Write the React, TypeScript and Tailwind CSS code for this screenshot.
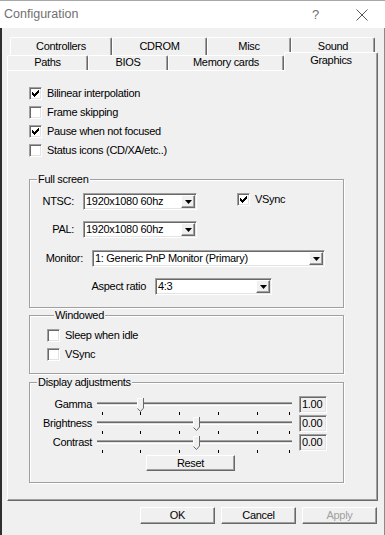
import { ReactNode } from "react";

// classic 3D edges
const raised =
  "border border-t-white border-l-white border-r-[#696969] border-b-[#696969] shadow-[inset_-1px_-1px_0_#a0a0a0]";
const sunken =
  "border border-t-[#a0a0a0] border-l-[#a0a0a0] border-r-white border-b-white shadow-[inset_1px_1px_0_#696969,inset_-1px_-1px_0_#e3e3e3]";

const CHECK = [
  "......#",
  ".....##",
  "#...###",
  "##.###.",
  "#####..",
  ".###...",
  "..#....",
];

function CheckBox({ checked }: { checked?: boolean }) {
  return (
    <span
      className={`flex h-[13px] w-[13px] shrink-0 items-center justify-center bg-white ${sunken}`}
    >
      {checked && (
        <svg width="7" height="7" viewBox="0 0 7 7" shapeRendering="crispEdges">
          {CHECK.map((row, y) =>
            row
              .split("")
              .map((c, x) =>
                c === "#" ? (
                  <rect key={`${x}-${y}`} x={x} y={y} width="1" height="1" fill="#000" />
                ) : null
              )
          )}
        </svg>
      )}
    </span>
  );
}

function CheckRow({ label, checked }: { label: string; checked?: boolean }) {
  return (
    <div className="flex h-[19px] items-center">
      <CheckBox checked={checked} />
      <span className="ml-[5px]">{label}</span>
    </div>
  );
}

function Combo({ value, width }: { value: string; width: string }) {
  return (
    <div className={`flex h-[17px] bg-white p-[1px] ${width} ${sunken}`}>
      <span className="flex-1 truncate pl-[1px] leading-[13px]">{value}</span>
      <span
        className={`flex h-[13px] w-[14px] items-center justify-center bg-[#f0f0f0] ${raised}`}
      >
        <svg width="7" height="4" viewBox="0 0 7 4">
          <path d="M0 0h7L3.5 4z" fill="#000" />
        </svg>
      </span>
    </div>
  );
}

function Group({
  title,
  className,
  children,
}: {
  title: string;
  className: string;
  children: ReactNode;
}) {
  return (
    <fieldset
      className={`ml-[21px] w-[315px] border border-[#a0a0a0] shadow-[inset_1px_1px_0_#fff,1px_1px_0_#fff] ${className}`}
    >
      <legend className="ml-[7px] bg-[#f0f0f0] px-[1px] leading-[13px]">{title}</legend>
      {children}
    </fieldset>
  );
}

const TICKS = [5, 43, 82, 121, 160, 192];

function Slider({ thumb }: { thumb: number }) {
  return (
    <div className="relative h-[19px] w-[195px]">
      <div className="absolute left-0 right-0 top-[7px] h-[4px] border-y border-t-[#a0a0a0] border-b-white bg-[#e3e3e3] shadow-[inset_0_1px_0_#696969]" />
      {TICKS.map((t) => (
        <div key={t} className="absolute top-[17px] h-[3px] w-px bg-black" style={{ left: t }} />
      ))}
      <svg
        className="absolute top-[3px]"
        style={{ left: thumb }}
        width="7"
        height="14"
        viewBox="0 0 7 14"
      >
        <path d="M0.5 0.5H6.5V10L3.5 13.5L0.5 10Z" fill="#f0f0f0" />
        <path d="M0.5 10V0.5H6" fill="none" stroke="#fff" />
        <path d="M6.5 0V10L3.5 13.5L0.5 10.5" fill="none" stroke="#696969" />
      </svg>
    </div>
  );
}

function AdjustRow({ label, thumb, value }: { label: string; thumb: number; value: string }) {
  return (
    <div className="flex h-[19px] items-center">
      <span className="w-[62px] text-right">{label}</span>
      <div className="ml-[5px]">
        <Slider thumb={thumb} />
      </div>
      <div className={`ml-[7px] h-[17px] w-[28px] bg-[#f0f0f0] pl-[2px] leading-[15px] ${sunken}`}>
        {value}
      </div>
    </div>
  );
}

function Button({ label, disabled }: { label: string; disabled?: boolean }) {
  return (
    <div
      className={`flex h-[17px] w-[75px] items-center justify-center bg-[#f0f0f0] ${raised} ${
        disabled ? "text-[#a0a0a0]" : ""
      }`}
    >
      {label}
    </div>
  );
}

function Tab({
  label,
  width,
  height,
  selected,
}: {
  label: string;
  width: string;
  height: string;
  selected?: boolean;
}) {
  return (
    <div
      className={`flex items-center justify-center rounded-t-[2px] border-l border-t border-r border-l-white border-t-white border-r-[#696969] bg-[#f0f0f0] pb-[1px] shadow-[inset_-1px_0_0_#a0a0a0] ${width} ${height} ${
        selected ? "relative z-10 mb-[-1px] pb-[3px]" : ""
      }`}
    >
      {label}
    </div>
  );
}

export default function App() {
  return (
    <div className="flex h-[535px] w-[385px] flex-col bg-[#f0f0f0] font-['Liberation_Sans',Arial,sans-serif] text-[11px] tracking-[-0.3px] text-black">
      {/* Title bar */}
      <div className="flex h-[28px] items-center border-t border-[#a8a8a8] bg-white pl-[4px] pr-[17px] text-[#707070]">
        <span className="text-[12.5px] tracking-normal">Configuration</span>
        <span className="ml-auto mr-[37px] text-[13px]">?</span>
        <svg width="12" height="12" viewBox="0 0 12 12">
          <path d="M0.5 0.5L11.5 11.5M11.5 0.5L0.5 11.5" stroke="#555" strokeWidth="1" />
        </svg>
      </div>

      {/* Dialog body */}
      <div className="flex flex-1 flex-col border-l-2 border-r border-l-[#2f2f2f] border-r-[#8a8a8a] pt-[9px]">
        {/* Tabs */}
        <div className="ml-[8px] flex h-[18px]">
          <Tab label="Controllers" width="w-[102px]" height="h-[18px]" />
          <Tab label="CDROM" width="w-[95px]" height="h-[18px]" />
          <Tab label="Misc" width="w-[84px]" height="h-[18px]" />
          <Tab label="Sound" width="w-[84px]" height="h-[18px]" />
        </div>
        <div className="ml-[5px] flex h-[15px] items-end">
          <Tab label="Paths" width="w-[81px]" height="h-[15px]" />
          <Tab label="BIOS" width="w-[80px]" height="h-[15px]" />
          <Tab label="Memory cards" width="w-[116px]" height="h-[15px]" />
          <Tab label="Graphics" width="w-[94px]" height="h-[19px]" selected />
        </div>

        {/* Tab panel */}
        <div className="ml-[5px] flex h-[431px] w-[371px] flex-col border border-t-white border-l-white border-r-[#696969] border-b-[#696969] shadow-[inset_-1px_-1px_0_#a0a0a0]">
          <div className="pl-[21px] pt-[13px]">
            <CheckRow label="Bilinear interpolation" checked />
            <CheckRow label="Frame skipping" />
            <CheckRow label="Pause when not focused" checked />
            <CheckRow label="Status icons (CD/XA/etc..)" />
          </div>

          <Group title="Full screen" className="mt-[13px] pb-[12px] pt-[7px]">
            <div className="flex h-[17px] items-start">
              <span className="w-[44px] text-right leading-[17px]">NTSC:</span>
              <div className="ml-[9px]">
                <Combo value="1920x1080 60hz" width="w-[114px]" />
              </div>
              <div className="ml-[40px] flex items-center">
                <CheckBox checked />
                <span className="ml-[5px] leading-[13px]">VSync</span>
              </div>
            </div>
            <div className="mt-[11px] flex h-[17px] items-center">
              <span className="w-[44px] text-right">PAL:</span>
              <div className="ml-[9px]">
                <Combo value="1920x1080 60hz" width="w-[114px]" />
              </div>
            </div>
            <div className="mt-[12px] flex h-[17px] items-center">
              <span className="w-[53px] text-right">Monitor:</span>
              <div className="ml-[9px]">
                <Combo value="1: Generic PnP Monitor (Primary)" width="w-[233px]" />
              </div>
            </div>
            <div className="mt-[11px] flex h-[17px] items-center">
              <span className="w-[116px] text-right">Aspect ratio</span>
              <div className="ml-[9px]">
                <Combo value="4:3" width="w-[117px]" />
              </div>
            </div>
          </Group>

          <Group title="Windowed" className="mt-[1px] pb-[9px] pl-[17px] pt-[4px]">
            <CheckRow label="Sleep when idle" />
            <CheckRow label="VSync" />
          </Group>

          <Group title="Display adjustments" className="mt-[2px] pb-[11px] pt-[6px]">
            <AdjustRow label="Gamma" thumb={40} value="1.00" />
            <AdjustRow label="Brightness" thumb={96} value="0.00" />
            <AdjustRow label="Contrast" thumb={96} value="0.00" />
            <div className="ml-[116px] mt-[3px]">
              <div
                className={`flex h-[16px] w-[89px] items-center justify-center bg-[#f0f0f0] ${raised}`}
              >
                Reset
              </div>
            </div>
          </Group>
        </div>

        {/* Buttons */}
        <div className="mt-[6px] flex justify-end gap-[6px] pr-[7px]">
          <Button label="OK" />
          <Button label="Cancel" />
          <Button label="Apply" disabled />
        </div>
      </div>
    </div>
  );
}
